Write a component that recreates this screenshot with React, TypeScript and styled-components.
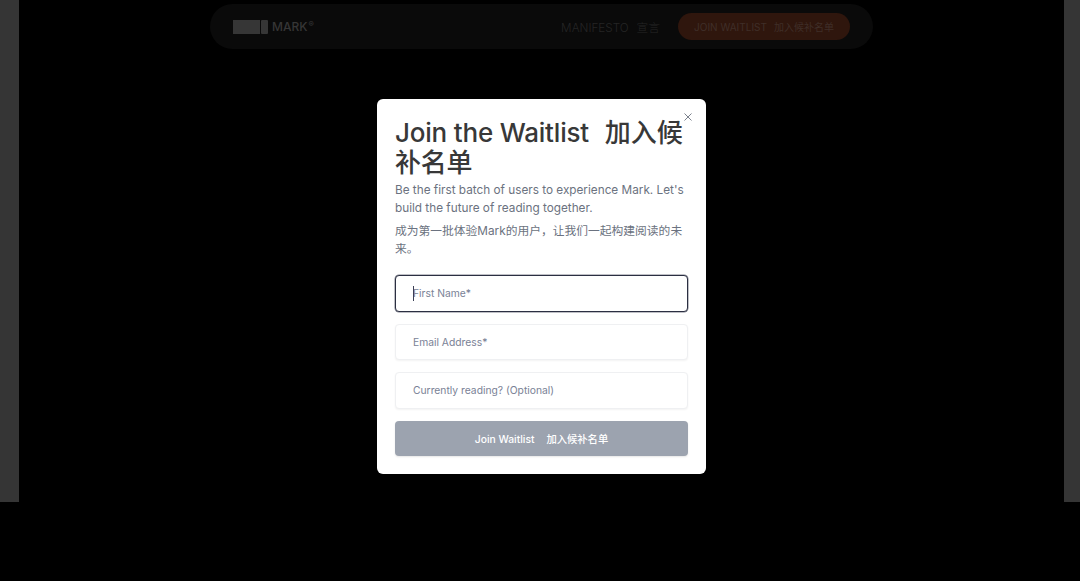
import React from "react";
import styled, { createGlobalStyle } from "styled-components";

const GlobalStyle = createGlobalStyle`
  html, body {
    margin: 0;
    padding: 0;
    background: #000;
    font-family: Inter, "Noto Sans CJK SC", sans-serif;
  }
`;

const Page = styled.div`
  width: 1080px;
  height: 581px;
  overflow: hidden;
  background: #000;
`;

const Backdrop = styled.div`
  height: 502px;
  background: #353535;
  padding: 0 16px 0 19px;
`;

const Content = styled.div`
  height: 100%;
  background: #000;
  padding-top: 4px;
  display: flex;
  justify-content: center;
  box-sizing: border-box;
`;

const Nav = styled.nav`
  width: 663px;
  height: 45px;
  padding: 0 23px;
  box-sizing: border-box;
  border-radius: 23px;
  background: #0a0a0a;
  display: flex;
  align-items: center;
  justify-content: space-between;
`;

const Brand = styled.div`
  display: flex;
  align-items: center;
  gap: 4px;
  color: #363636;
  font-size: 12px;
  font-weight: 500;
`;

const BrandName = styled.span`
  display: flex;
  align-items: center;
  sup {
    font-size: 8px;
    line-height: 1;
    margin: -5px 0 0 1px;
  }
`;

const NavLinks = styled.div`
  display: flex;
  align-items: center;
  gap: 18px;
`;

const NavLink = styled.span`
  color: #252525;
  font-size: 11.7px;
  font-weight: 300;
`;

const Cn = styled.span<{ $gap: number }>`
  margin-left: ${(p) => p.$gap}px;
  letter-spacing: 0;
`;

const NavButton = styled.span`
  width: 172px;
  height: 27px;
  border-radius: 14px;
  background: #2f160d;
  color: #3f2e28;
  font-size: 10px;
  display: flex;
  align-items: center;
  justify-content: center;
`;

const Overlay = styled.div`
  position: fixed;
  inset: 0;
  padding-top: 99px;
  display: flex;
  justify-content: center;
  align-items: flex-start;
`;

const Modal = styled.form`
  position: relative;
  left: 1.5px;
  width: 329px;
  height: 375px;
  box-sizing: border-box;
  padding: 19px 18px 18px;
  border-radius: 6px;
  background: #fff;
`;

const Close = styled.button`
  position: absolute;
  top: 13px;
  right: 13px;
  width: 10px;
  height: 10px;
  padding: 0;
  border: 0;
  background: none;
  color: #7b818c;
  display: flex;
`;

const Title = styled.h2`
  margin: 0;
  color: #383838;
  font-size: 26px;
  line-height: 29.5px;
  font-weight: 500;
  letter-spacing: -0.2px;
`;

const Description = styled.p<{ $gap?: number }>`
  margin: ${(p) => p.$gap ?? 0}px 0 0;
  color: #6b7280;
  font-size: 11.78px;
  line-height: 18px;
`;

const Fields = styled.div`
  margin-top: 17px;
  display: flex;
  flex-direction: column;
  gap: 12px;
`;

const FieldWrap = styled.div`
  position: relative;
  display: flex;
  flex-direction: column;
`;

const Caret = styled.span`
  position: absolute;
  left: 18px;
  top: 11px;
  width: 1px;
  height: 15px;
  background: #3a3f55;
`;

const Field = styled.input`
  height: 36.5px;
  box-sizing: border-box;
  padding: 0 17px;
  border-radius: 4px;
  border: 1px solid #eff0f2;
  outline: none;
  background: #fff;
  box-shadow: 0 1px 2px rgba(0, 0, 0, 0.05);
  font-family: inherit;
  font-size: 10.3px;
  caret-color: transparent;
  &::placeholder {
    color: #7a8296;
    opacity: 1;
  }
  &:focus {
    border-color: #2b2f42;
    box-shadow: 0 0 0 0.5px rgba(43, 47, 66, 0.6);
  }
`;

const Submit = styled.button`
  height: 35.5px;
  border: 0;
  border-radius: 4px;
  background: #9ca3af;
  color: #fff;
  font-family: inherit;
  font-size: 10.3px;
  font-weight: 500;
  display: flex;
  align-items: center;
  justify-content: center;
  box-shadow: 0 1px 2px rgba(0, 0, 0, 0.1);
`;

const App = (): JSX.Element => {
  return (
    <Page>
      <GlobalStyle />
      <Backdrop>
        <Content>
          <Nav>
            <Brand>
              <svg width="35" height="14" viewBox="0 0 35 14">
                <rect width="27" height="14" fill="#363636" />
                <rect x="28" width="7" height="14" rx="1" fill="#363636" />
              </svg>
              <BrandName>
                MARK<sup>®</sup>
              </BrandName>
            </Brand>
            <NavLinks>
              <NavLink>
                MANIFESTO<Cn $gap={8}>宣言</Cn>
              </NavLink>
              <NavButton>
                <span>
                  JOIN WAITLIST<Cn $gap={7}>加入候补名单</Cn>
                </span>
              </NavButton>
            </NavLinks>
          </Nav>
        </Content>
      </Backdrop>
      <Overlay>
        <Modal>
          <Close type="button" aria-label="Close">
            <svg width="10" height="10" viewBox="0 0 10 10" fill="none" stroke="currentColor" strokeWidth="1">
              <path d="M1.5 1.5l7 7M8.5 1.5l-7 7" />
            </svg>
          </Close>
          <Title>
            Join the Waitlist <Cn $gap={9}>加入候</Cn>补名单
          </Title>
          <Description $gap={4}>Be the first batch of users to experience Mark. Let's build the future of reading together.</Description>
          <Description $gap={5}>成为第一批体验Mark的用户，让我们一起构建阅读的未来。</Description>
          <Fields>
            <FieldWrap>
              <Field autoFocus placeholder="First Name*" />
              <Caret />
            </FieldWrap>
            <Field placeholder="Email Address*" />
            <Field placeholder="Currently reading? (Optional)" />
            <Submit type="button">
              <span>
                Join Waitlist<Cn $gap={12}>加入候补名单</Cn>
              </span>
            </Submit>
          </Fields>
        </Modal>
      </Overlay>
    </Page>
  );
};

export default App;
